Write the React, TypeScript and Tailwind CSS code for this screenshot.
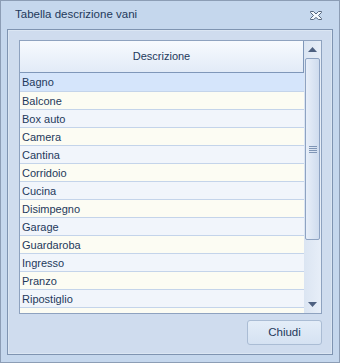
const rows = [
  "Bagno",
  "Balcone",
  "Box auto",
  "Camera",
  "Cantina",
  "Corridoio",
  "Cucina",
  "Disimpegno",
  "Garage",
  "Guardaroba",
  "Ingresso",
  "Pranzo",
  "Ripostiglio",
  "Soggiorno",
];

function CloseIcon() {
  return (
    <svg width="14" height="11" viewBox="0 0 14 11">
      <path
        d="M1.5 1.5h3l2.5 2.5 2.5-2.5h3v1l-3 3 3 3v1h-3L7 7.5 4.5 9.5h-3v-1l3-3-3-3z"
        fill="#f4f8fc"
        stroke="#56677e"
        strokeWidth="1"
        strokeLinejoin="round"
      />
    </svg>
  );
}

function Arrow({ down }: { down?: boolean }) {
  return (
    <svg width="9" height="5" viewBox="0 0 9 5">
      <path d={down ? "M0 0h9L4.5 5z" : "M4.5 0L9 5H0z"} fill="#4d6080" />
    </svg>
  );
}

export default function App() {
  return (
    <div
      className="flex h-[363px] w-[340px] flex-col border border-[#8c9db5] bg-[#c5d7ed] text-[#1e395b]"
      style={{ fontFamily: '"Liberation Sans", Arial, sans-serif' }}
    >
      {/* title bar */}
      <div className="flex h-[28px] shrink-0 items-center justify-between pl-[14px] pr-[16px]">
        <span className="text-[11.5px]">Tabella descrizione vani</span>
        <CloseIcon />
      </div>

      {/* inner panel */}
      <div className="mx-[6px] mb-[7px] flex flex-1 flex-col border border-[#7f94b1] bg-[#cfdcee] pb-[9px] pl-[11px] pr-[10px] pt-[10px] shadow-[inset_0_0_0_1px_#dbe6f3]">
        <div className="flex h-[274px] border border-[#8ea2bf] bg-[#f1f5fb]">
          <div className="flex flex-1 flex-col overflow-hidden">
            <div className="flex h-[32px] shrink-0 items-center justify-center border-b border-r border-[#7f97b9] bg-gradient-to-b from-[#f7fafe] to-[#e2ebf7] text-[11px]">
              Descrizione
            </div>
            {rows.map((r, i) => (
              <div
                key={r}
                className={
                  "flex shrink-0 items-center border-b border-[#c4d4ea] pl-[2px] pt-[1px] text-[11px] " +
                  (i === 0
                    ? "h-[19px] bg-[#d5e5fb]"
                    : i % 2 === 1
                      ? "h-[18px] bg-[#fcfcf3]"
                      : "h-[18px] bg-[#f1f5fb]")
                }
              >
                {r}
              </div>
            ))}
          </div>

          {/* scrollbar */}
          <div className="flex w-[17px] shrink-0 flex-col items-center bg-gradient-to-r from-[#dbe5f2] to-[#e7eef8]">
            <div className="flex h-[17px] items-center justify-center">
              <Arrow />
            </div>
            <div className="flex h-[182px] w-[15px] items-center justify-center rounded-[2px] border border-[#8ea3c2] bg-gradient-to-r from-[#e8eff9] to-[#cfdcee]">
              <div className="flex flex-col gap-[1px]">
                <div className="h-px w-[8px] bg-[#7f95b5]" />
                <div className="h-px w-[8px] bg-[#7f95b5]" />
                <div className="h-px w-[8px] bg-[#7f95b5]" />
                <div className="h-px w-[8px] bg-[#7f95b5]" />
              </div>
            </div>
            <div className="flex-1" />
            <div className="flex h-[17px] items-center justify-center">
              <Arrow down />
            </div>
          </div>
        </div>

        <div className="mt-[6px] flex justify-end">
          <button className="h-[25px] w-[75px] rounded-[3px] border border-[#aabcd4] bg-gradient-to-b from-[#e4edf8] to-[#d5e2f2] text-[11.5px] text-[#1e395b]">
            Chiudi
          </button>
        </div>
      </div>
    </div>
  );
}
